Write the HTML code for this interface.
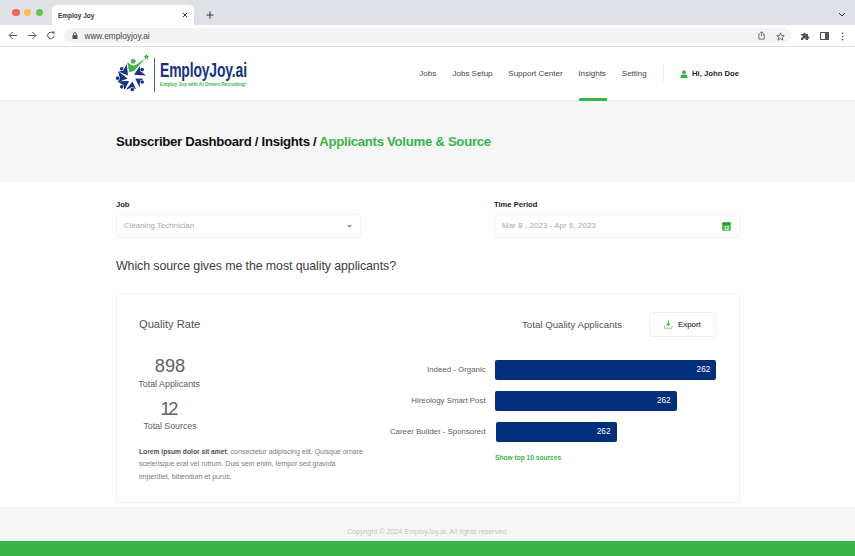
<!DOCTYPE html>
<html><head><meta charset="utf-8">
<style>
*{margin:0;padding:0;box-sizing:border-box}
html,body{width:855px;height:556px;overflow:hidden;background:#fff;font-family:"Liberation Sans",sans-serif;}
.a{position:absolute;white-space:nowrap;line-height:1}
#tabs{left:0;top:0;width:855px;height:25px;background:#dee1e6}
#tab{left:52px;top:4.7px;width:142px;height:21px;background:#fff;border-radius:5px 5px 0 0}
.dot{width:7.2px;height:7.2px;border-radius:50%;top:9px}
#bar{left:0;top:25px;width:855px;height:21px;background:#fff}
#barline{left:0;top:46px;width:855px;height:1px;background:#e0e0e0}
#pill{left:64px;top:28px;width:727px;height:15px;border-radius:8px;background:#f1f3f4}
#hdr{left:0;top:47px;width:855px;height:53px;background:#fff}
#hdrline{left:0;top:100px;width:855px;height:1px;background:#ebebeb}
#band{left:0;top:100.6px;width:855px;height:81.4px;background:#f6f6f6}
.nav{font-size:8px;color:#444;top:69.6px}
#foot{left:0;top:506.6px;width:855px;height:35px;background:#f6f6f6}
#green{left:0;top:540.7px;width:855px;height:16px;background:#39b54a}
.inp{border:1px solid #f3f3f3;border-bottom-color:#ececec;border-radius:3px;background:#fff;height:24px;top:214px}
.lbl{font-size:7.6px;font-weight:bold;color:#222;top:201px}
.ph{font-size:7.85px;color:#a8a8a8;top:222px}
#card{left:115.5px;top:292.6px;width:624px;height:210.4px;border:1px solid #f4f4f4;border-bottom-color:#efefef;border-radius:3px;background:#fff}
.bar{background:#032e7a;border-radius:2px;height:20.2px;left:495px}
.bl{font-size:7.87px;color:#606060;text-align:right;width:200px;left:285.6px}
.bv{font-size:8.2px;color:#fff}
.c{text-align:center;width:120px;left:110px;color:#606060}
</style></head><body>
<div class="a" id="tabs"></div>
<div class="a dot" style="left:12.4px;background:#ee6a5f"></div>
<div class="a dot" style="left:24.2px;background:#f5bf4f"></div>
<div class="a dot" style="left:36px;background:#62c454"></div>
<div class="a" id="tab"></div>
<div class="a" style="left:58px;top:11.9px;font-size:7.8px;font-weight:bold;color:#333;transform-origin:0 50%;transform:scaleX(0.83)">Employ Joy</div>
<svg class="a" style="left:181.5px;top:12px" width="6" height="6" viewBox="0 0 6 6"><path d="M0.9 0.9L5.1 5.1M5.1 0.9L0.9 5.1" stroke="#333" stroke-width="1" fill="none"/></svg>
<svg class="a" style="left:206px;top:11px" width="8" height="8" viewBox="0 0 8 8"><path d="M4 0.5V7.5M0.5 4H7.5" stroke="#333" stroke-width="1" fill="none"/></svg>
<svg class="a" style="left:838px;top:12.3px" width="8" height="5" viewBox="0 0 8 5"><path d="M1 1L4 4L7 1" stroke="#333" stroke-width="1" fill="none"/></svg>
<div class="a" id="bar"></div>
<div class="a" id="barline"></div>
<div class="a" id="pill"></div>
<svg class="a" style="left:8px;top:31px" width="10" height="9" viewBox="0 0 10 9"><path d="M9 4.5H1.5M4.7 1L1.2 4.5L4.7 8" stroke="#505357" stroke-width="1" fill="none"/></svg>
<svg class="a" style="left:27px;top:31px" width="10" height="9" viewBox="0 0 10 9"><path d="M1 4.5H8.5M5.3 1L8.8 4.5L5.3 8" stroke="#505357" stroke-width="1" fill="none"/></svg>
<svg class="a" style="left:46px;top:31px" width="10" height="9" viewBox="0 0 10 9"><path d="M8 4.5A3.2 3.2 0 1 1 6.8 2" stroke="#505357" stroke-width="1" fill="none"/><path d="M5.5 0.5H8.4V3.4Z" fill="#505357"/></svg>
<svg class="a" style="left:72px;top:32px" width="6" height="7" viewBox="0 0 6 7"><rect x="0.5" y="3" width="5" height="4" rx="0.6" fill="#505357"/><path d="M1.6 3V2A1.4 1.4 0 0 1 4.4 2V3" stroke="#505357" stroke-width="0.9" fill="none"/></svg>
<div class="a" style="left:84.4px;top:31.7px;font-size:8.3px;color:#444">www.employjoy.ai</div>
<svg class="a" style="left:757.8px;top:31.3px" width="7.2" height="9" viewBox="0 0 8 10"><path d="M2.5 3.5H1V9H7V3.5H5.5M4 6V1M2.3 2.5L4 0.8L5.7 2.5" stroke="#555" stroke-width="0.9" fill="none"/></svg>
<svg class="a" style="left:776px;top:31.5px" width="9" height="9" viewBox="0 0 10 10"><path d="M5 1L6.2 3.8L9.2 4L6.9 6L7.6 9L5 7.4L2.4 9L3.1 6L0.8 4L3.8 3.8Z" stroke="#555" stroke-width="0.9" fill="none"/></svg>
<svg class="a" style="left:800px;top:31px" width="10" height="10" viewBox="0 0 10 10"><path d="M1 3H3.2A1.3 1.3 0 1 1 5.8 3H8V5.2A1.3 1.3 0 1 1 8 7.8V9H5.6A1.2 1.2 0 1 0 3.4 9H1V6.6A1.2 1.2 0 1 0 1 4.4Z" fill="#505357"/></svg>
<svg class="a" style="left:820px;top:32px" width="9" height="8" viewBox="0 0 9 8"><rect x="0.5" y="0.5" width="8" height="7" stroke="#505357" fill="none"/><rect x="5" y="0.5" width="3.5" height="7" fill="#505357"/></svg>
<svg class="a" style="left:840.7px;top:31.5px" width="3" height="9" viewBox="0 0 3 10"><circle cx="1.5" cy="1.5" r="0.9" fill="#505357"/><circle cx="1.5" cy="5" r="0.9" fill="#505357"/><circle cx="1.5" cy="8.5" r="0.9" fill="#505357"/></svg>

<div class="a" id="hdr"></div>
<div class="a" id="hdrline"></div>
<!-- logo -->
<svg class="a" style="left:110px;top:48px" width="50" height="50" viewBox="0 0 556 556" id="logo"><g fill="#15347d"><path d="M100 264L151 243L187 177L200 307Z"/><circle cx="130" cy="230" r="25" fill="#fff"/><circle cx="130" cy="230" r="20"/><path d="M88 382L109 330L89 255L195 340Z"/><circle cx="85" cy="335" r="25" fill="#fff"/><circle cx="85" cy="335" r="20"/><path d="M162 465L144 412L81 371L213 366Z"/><circle cx="130" cy="432" r="25" fill="#fff"/><circle cx="130" cy="432" r="20"/><path d="M289 459L242 438L178 463L250 372Z"/><circle cx="248" cy="462" r="25" fill="#fff"/><circle cx="248" cy="462" r="20"/><path d="M373 341L334 373L329 440L281 338Z"/><circle cx="358" cy="378" r="25" fill="#fff"/><circle cx="358" cy="378" r="20"/><path d="M330 204L341 258L400 307L267 297Z"/><circle cx="358" cy="240" r="25" fill="#fff"/><circle cx="358" cy="240" r="20"/></g><g fill="#3db54a"><circle cx="258" cy="148" r="27"/><path d="M192 158L238 190Q262 200 290 186L392 118L272 250L214 272Z" stroke="#fff" stroke-width="8" paint-order="stroke"/><path d="M405 62 L414 86 L439 87 L419 103 L426 127 L405 113 L384 127 L391 103 L371 87 L396 86 Z"/></g></svg>
<div class="a" style="left:154px;top:57.8px;width:0.9px;height:34.2px;background:#4a62a0"></div>
<div class="a" id="brand" style="left:160px;top:59.8px;font-size:20px;font-weight:bold;color:#15347d;transform-origin:0 0;transform:scaleX(0.695);letter-spacing:-0.2px">EmployJoy.ai</div>
<div class="a" id="tag" style="left:160.3px;top:82.1px;font-size:5.7px;font-weight:bold;color:#3db54a;transform-origin:0 0;transform:scaleX(0.84)">Employ Joy with AI Driven Recruiting!</div>

<div class="a nav" id="n1" style="left:419.3px">Jobs</div>
<div class="a nav" id="n2" style="left:452.5px">Jobs Setup</div>
<div class="a nav" id="n3" style="left:508.3px">Support Center</div>
<div class="a nav" id="n4" style="left:578.3px">Insights</div>
<div class="a nav" id="n5" style="left:621.8px">Setting</div>
<div class="a" style="left:579px;top:98px;width:27.5px;height:2.6px;background:#39b54a;border-radius:1px"></div>
<div class="a" style="left:663px;top:65px;width:1px;height:17px;background:#ebebeb"></div>
<svg class="a" style="left:680px;top:69.5px" width="8" height="8" viewBox="0 0 8 8"><circle cx="4" cy="2.2" r="1.9" fill="#39b54a"/><path d="M0.5 8V6.8A2.3 2.3 0 0 1 2.8 4.6H5.2A2.3 2.3 0 0 1 7.5 6.8V8Z" fill="#39b54a"/></svg>
<div class="a" id="user" style="left:692px;top:69.6px;font-size:7.7px;font-weight:bold;color:#222">Hi, John Doe</div>

<div class="a" id="band"></div>
<div class="a" id="title" style="left:116px;top:134.6px;font-size:13.2px;font-weight:bold;color:#111;letter-spacing:-0.3px">Subscriber Dashboard / Insights / <span style="color:#39b54a">Applicants Volume &amp; Source</span></div>

<div class="a lbl" style="left:116px">Job</div>
<div class="a inp" style="left:116px;width:245px"></div>
<div class="a ph" id="ph1" style="left:124px">Cleaning Technician</div>
<svg class="a" style="left:347px;top:225px" width="5" height="3" viewBox="0 0 5 3"><path d="M0 0H5L2.5 3Z" fill="#9a9a9a"/></svg>
<div class="a lbl" style="left:494px">Time Period</div>
<div class="a inp" style="left:494px;width:246px"></div>
<div class="a ph" id="ph2" style="left:502px;letter-spacing:0.11px">Mar 8 , 2023 - Apr 6, 2023</div>
<svg class="a" style="left:721.5px;top:221.7px" width="9" height="9" viewBox="0 0 9 9"><rect x="0.2" y="0.6" width="8.6" height="8.2" rx="0.8" fill="#3bb54d"/><rect x="0.2" y="0.6" width="8.6" height="2.2" rx="0.8" fill="#2a9b3c"/><rect x="2" y="0" width="1" height="1.6" fill="#2a9b3c"/><rect x="6" y="0" width="1" height="1.6" fill="#2a9b3c"/><text x="4.5" y="7.7" font-size="4.6" font-weight="bold" text-anchor="middle" fill="#fff" font-family="Liberation Sans">12</text></svg>

<div class="a" id="q" style="left:116px;top:260px;font-size:12.4px;color:#3c3c3c;letter-spacing:-0.09px">Which source gives me the most quality applicants?</div>

<div class="a" id="card"></div>
<div class="a" id="qr" style="left:139px;top:319px;font-size:11.15px;color:#555">Quality Rate</div>
<div class="a c" id="big1" style="top:357.2px;font-size:18.3px;color:#636363">898</div>
<div class="a c" id="s1" style="top:379.6px;font-size:8.9px;left:109.2px">Total Applicants</div>
<div class="a c" id="big2" style="top:399.7px;font-size:18.3px;left:108.3px;letter-spacing:-2.3px;color:#636363">12</div>
<div class="a c" id="s2" style="top:422px;font-size:8.9px;left:110px;letter-spacing:-0.05px">Total Sources</div>
<div class="a" id="lorem" style="left:139px;top:445.9px;font-size:7px;line-height:12.4px;color:#7a7a7a;white-space:nowrap"><b style="color:#505050;font-size:6.7px">Lorem ipsum dolor sit amet</b>, consectetur adipiscing elit. Quisque ornare<br>scelerisque erat vel rutrum. Duis sem enim, tempor sed gravida<br>imperdiet, bibendum et purus.</div>

<div class="a" id="tqa" style="left:522px;top:319.5px;font-size:9.7px;color:#555">Total Quality Applicants</div>
<div class="a" style="left:649px;top:312px;width:67px;height:25px;border:1px solid #f0f0f0;border-radius:3px;background:#fff"></div>
<svg class="a" style="left:664.2px;top:320px" width="8.6" height="9" viewBox="0 0 9 9"><path d="M0.6 5.8V8.4H8.4V5.8" stroke="#7fd08a" stroke-width="1" fill="none"/><path d="M4.5 0.3V4" stroke="#39b54a" stroke-width="1.1" fill="none"/><path d="M2.2 3.4H6.8L4.5 6.3Z" fill="#39b54a"/></svg>
<div class="a" id="exp" style="left:678px;top:320.5px;font-size:7.9px;color:#333;-webkit-text-stroke:0.15px #333">Export</div>

<div class="a bl" style="top:365.5px">Indeed - Organic</div>
<div class="a bl" style="top:396.5px">Hireology Smart Post</div>
<div class="a bl" style="top:427.5px">Career Builder - Sponsored</div>
<div class="a bar" style="top:359.8px;width:221px"></div>
<div class="a bar" style="top:390.8px;width:182px"></div>
<div class="a bar" style="top:421.9px;width:120.6px;left:496px"></div>
<div class="a bv" style="left:696.6px;top:365.6px">262</div>
<div class="a bv" style="left:657px;top:396.6px">262</div>
<div class="a bv" style="left:596.8px;top:427.7px">262</div>
<div class="a" id="show" style="left:495px;top:454.6px;font-size:6.62px;font-weight:bold;color:#39b54a">Show top 10 sources</div>

<div class="a" id="foot"></div>
<div class="a" id="copy" style="left:0;width:855px;text-align:center;top:529.3px;font-size:7.1px;color:#c4c4c4">Copyright © 2024 EmployJoy.ai, All rights reserved.</div>
<div class="a" id="green"></div>
</body></html>
